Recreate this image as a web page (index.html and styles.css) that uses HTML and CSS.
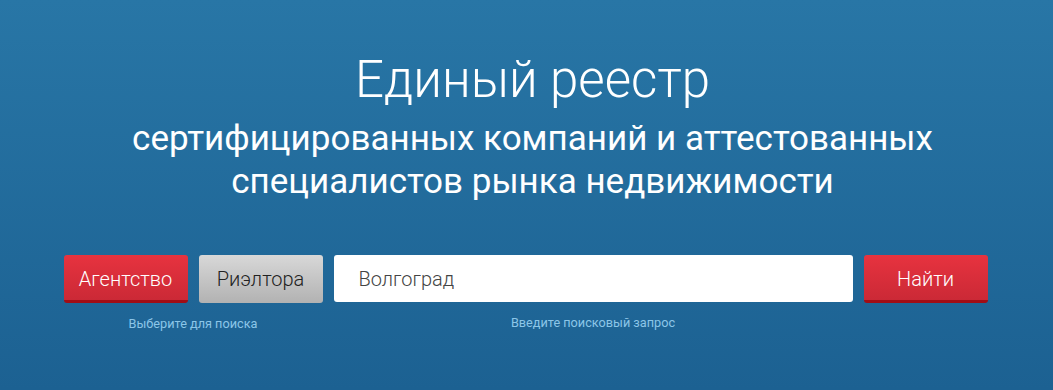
FILE: index.html
```html
<!DOCTYPE html>
<html lang="ru">
<head>
<meta charset="utf-8">
<title>Единый реестр</title>
<link rel="stylesheet" href="styles.css">
</head>
<body>
<section class="hero">
  <div class="heading">
    <h1 class="title">Единый реестр</h1>
    <p class="subtitle">сертифицированных компаний и аттестованных<br>специалистов рынка недвижимости</p>
  </div>
  <form class="search">
    <div class="col col-type">
      <div class="types">
        <button type="button" class="btn btn-red">Агентство</button>
        <button type="button" class="btn btn-gray">Риэлтора</button>
      </div>
      <div class="hint">Выберите для поиска</div>
    </div>
    <div class="col col-input">
      <input class="field" type="text" value="Волгоград">
      <div class="hint">Введите поисковый запрос</div>
    </div>
    <div class="col col-go">
      <button type="button" class="btn btn-red">Найти</button>
    </div>
  </form>
</section>
</body>
</html>
```
FILE: styles.css
```css
html, body {
  margin: 0;
  padding: 0;
}
body {
  width: 1053px;
  height: 390px;
  overflow: hidden;
  font-family: Roboto, "Noto Sans", sans-serif;
  background: linear-gradient(to bottom, #2876a6 0%, #1c6192 100%);
  color: #fff;
}
.hero {
  display: flex;
  flex-direction: column;
  align-items: center;
  padding-top: 50px;
}
.heading {
  display: flex;
  flex-direction: column;
  align-items: center;
  padding-left: 12px;
}
.title {
  margin: 0;
  font-weight: 300;
  font-size: 51px;
  line-height: 60px;
  letter-spacing: 0;
}
.subtitle {
  margin: 7px 0 0;
  font-weight: 400;
  font-size: 35px;
  line-height: 43px;
  text-align: center;
}
.search {
  display: flex;
  align-items: flex-start;
  gap: 11px;
  margin-top: 52px;
  margin-left: -2px;
}
.col {
  display: flex;
  flex-direction: column;
  align-items: center;
}
.types {
  display: flex;
  gap: 11px;
}
.btn {
  width: 124px;
  height: 48px;
  border: 0;
  border-radius: 3px;
  font-family: Roboto, "Noto Sans", sans-serif;
  font-size: 20px;
  font-weight: 300;
  padding: 0;
  cursor: pointer;
  box-sizing: border-box;
}
.btn-red {
  color: #fff;
  background: linear-gradient(to bottom, #e7333f 0%, #cb2936 100%);
  border-bottom: 3px solid #a10d15;
  padding-top: 2px;
}
.btn-gray {
  color: #222;
  background: linear-gradient(to bottom, #d8d8d8 0%, #b2b2b2 100%);
  padding-bottom: 1px;
}
.field {
  width: 519px;
  height: 47px;
  box-sizing: border-box;
  border: 0;
  border-radius: 3px;
  background: #fff;
  padding: 0 0 0 25px;
  font-family: Roboto, "Noto Sans", sans-serif;
  font-size: 20px;
  font-weight: 300;
  color: #444;
  outline: none;
}
.hint {
  margin-top: 14px;
  font-size: 12.7px;
  line-height: 14px;
  color: #8cc6e8;
}
```
